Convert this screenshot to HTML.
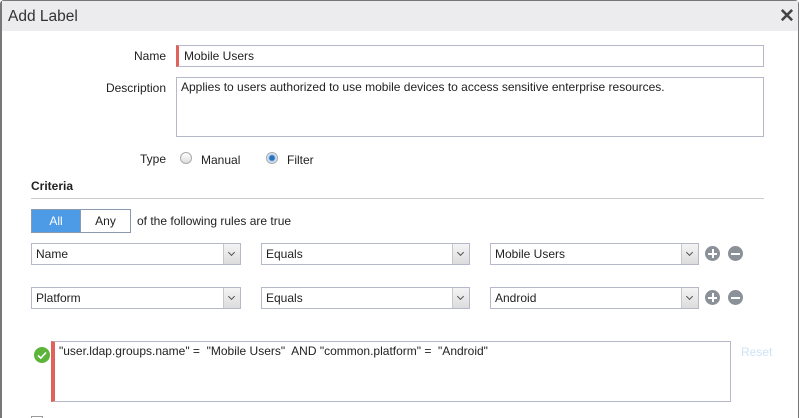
<!DOCTYPE html>
<html><head><style>
*{box-sizing:border-box;margin:0;padding:0}
html,body{width:800px;height:418px;overflow:hidden}
body{background:#fff;font-family:"Liberation Sans",sans-serif;font-size:12px;color:#222;position:relative}
.dlg{position:absolute;left:0;top:0;width:799px;height:418px;border:1px solid #777;border-bottom:none;border-left:2px solid #777;border-radius:4px 4px 0 0;background:#fff}
.hdr{position:absolute;left:0;top:0;right:0;height:30px;background:#ececee}
.a{position:absolute}
.lbl{position:absolute;text-align:right;width:100px}
.inp{position:absolute;border:1px solid #b5b8c8;background:#fff}
.sel{position:absolute;border:1px solid #b5b8c8;background:#fff;height:22px;padding:3px 4px;font-size:12px}
.sel .btn{position:absolute;right:0;top:0;width:17px;height:20px;border-left:1px solid #c8c8c8;background:linear-gradient(#f4f4f4,#dcdcdc)}
.sel .btn:after{content:"";position:absolute;left:5px;top:6px;width:4px;height:4px;border-right:1.5px solid #555;border-bottom:1.5px solid #555;transform:rotate(45deg)}
.circ{position:absolute;width:15px;height:15px;border-radius:50%;background:#8b9199;color:#fff}
.circ:before{content:"";position:absolute;left:3px;top:6.5px;width:9px;height:2px;background:#fff}
.plus:after{content:"";position:absolute;left:6.5px;top:3px;width:2px;height:9px;background:#fff}
</style></head><body>
<div class="dlg">
<div class="hdr"></div>
</div>
<div class="a" style="left:8px;top:8px;font-size:15.5px;color:#333">Add Label</div>
<div class="a" style="left:779px;top:5px;font-size:19px;font-weight:bold;color:#444">✕</div>

<div class="lbl" style="left:66px;top:49px">Name</div>
<div class="inp" style="left:176px;top:45px;width:588px;height:22px;border-left:3px solid #e0625a;padding:3px 5px">Mobile Users</div>
<div class="lbl" style="left:66px;top:81px">Description</div>
<div class="inp" style="left:176px;top:77px;width:588px;height:60px;padding:2px 4px">Applies to users authorized to use mobile devices to access sensitive enterprise resources.</div>

<div class="lbl" style="left:66px;top:152px">Type</div>
<div class="a" style="left:180px;top:152px;width:12px;height:12px;border-radius:50%;border:1px solid #aaa;background:linear-gradient(#fff,#ddd)"></div>
<div class="a" style="left:201px;top:153px">Manual</div>
<div class="a" style="left:266px;top:152px;width:12px;height:12px;border-radius:50%;border:1px solid #aaa;background:radial-gradient(circle,#2a6fb8 0 2.5px,#9cc6ea 3px,#e8f2fb 5px)"></div>
<div class="a" style="left:287px;top:153px">Filter</div>

<div class="a" style="left:31px;top:179px;font-weight:bold">Criteria</div>
<div class="a" style="left:31px;top:198px;width:733px;height:1px;background:#ccc"></div>

<div class="a" style="left:31px;top:209px;width:50px;height:24px;background:#4d9be6;border:1px solid #8a99ad;color:#fff;text-align:center;line-height:22px">All</div>
<div class="a" style="left:80px;top:209px;width:51px;height:24px;border:1px solid #8a99ad;text-align:center;line-height:22px">Any</div>
<div class="a" style="left:137px;top:214px">of the following rules are true</div>

<div class="sel" style="left:31px;top:243px;width:210px">Name<div class="btn"></div></div>
<div class="sel" style="left:261px;top:243px;width:209px">Equals<div class="btn"></div></div>
<div class="sel" style="left:490px;top:243px;width:209px">Mobile Users<div class="btn"></div></div>
<div class="circ plus" style="left:705px;top:246px"></div>
<div class="circ" style="left:728px;top:246px"></div>

<div class="sel" style="left:31px;top:287px;width:210px">Platform<div class="btn"></div></div>
<div class="sel" style="left:261px;top:287px;width:209px">Equals<div class="btn"></div></div>
<div class="sel" style="left:490px;top:287px;width:209px">Android<div class="btn"></div></div>
<div class="circ plus" style="left:705px;top:290px"></div>
<div class="circ" style="left:728px;top:290px"></div>

<svg class="a" style="left:33px;top:346px" width="18" height="18"><circle cx="9" cy="9" r="8" fill="#5cb53a"/><path d="M5 9.5l2.8 2.6L13 6.5" stroke="#fff" stroke-width="1.6" fill="none"/></svg>
<div class="inp" style="left:51px;top:341px;width:680px;height:61px;border-left:4px solid #e0625a;padding:2px 4px">"user.ldap.groups.name" =&nbsp; "Mobile Users"&nbsp; AND "common.platform" =&nbsp; "Android"</div>
<div class="a" style="left:741px;top:345px;color:#cfe2f6">Reset</div>
<div class="a" style="left:31px;top:416px;width:12px;height:6px;border:1px solid #999"></div>
</body></html>
